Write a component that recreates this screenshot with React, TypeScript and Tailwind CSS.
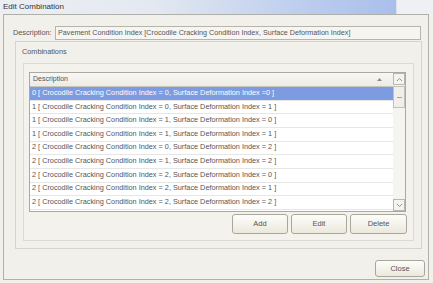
const rows = [
  "0 [ Crocodile Cracking Condition Index = 0, Surface Deformation Index =0 ]",
  "1 [ Crocodile Cracking Condition Index = 0, Surface Deformation Index = 1 ]",
  "1 [ Crocodile Cracking Condition Index = 1, Surface Deformation Index = 0 ]",
  "1 [ Crocodile Cracking Condition Index = 1, Surface Deformation Index = 1 ]",
  "2 [ Crocodile Cracking Condition Index = 0, Surface Deformation Index = 2 ]",
  "2 [ Crocodile Cracking Condition Index = 1, Surface Deformation Index = 2 ]",
  "2 [ Crocodile Cracking Condition Index = 2, Surface Deformation Index = 0 ]",
  "2 [ Crocodile Cracking Condition Index = 2, Surface Deformation Index = 1 ]",
  "2 [ Crocodile Cracking Condition Index = 2, Surface Deformation Index = 2 ]",
];

function Button({ label, className }: { label: string; className: string }) {
  return (
    <button
      className={`flex items-center justify-center rounded-[3px] border border-[#aaa79a] bg-[linear-gradient(to_bottom,#fdfdfb,#ebe8dc)] text-[7.5px] text-[#555] ${className}`}
    >
      {label}
    </button>
  );
}

function ScrollBtn({ up }: { up: boolean }) {
  return (
    <div className="flex h-[12px] w-[12px] items-center justify-center border border-[#b9b8b0] bg-[#f4f3ef]">
      <svg width="7" height="5" viewBox="0 0 7 5">
        <path
          d={up ? "M1 4 L3.5 1.5 L6 4" : "M1 1 L3.5 3.5 L6 1"}
          fill="none"
          stroke="#8a8a88"
          strokeWidth="0.9"
        />
      </svg>
    </div>
  );
}

export default function App() {
  return (
    <div className="flex h-[283px] w-[433px] flex-col bg-[#f1f0eb] font-['Liberation_Sans',Arial,sans-serif] text-[#555]">
      {/* title bar */}
      <div className="flex h-[14px] items-center bg-[linear-gradient(to_right,#eceef2_0%,#e4e9f1_35%,#bccdee_70%,#a9bfea_91.5%,#eef0f3_91.6%)] pl-[3px] text-[8px] text-[#333]">
        Edit Combination
      </div>

      <div className="flex flex-1 pb-[3px] pl-[3px] pr-[4px]">
        <div className="flex flex-1 flex-col border border-[#b0b0ab] bg-[#f1f0eb]">
          {/* description */}
          <div className="mt-[11px] flex items-center pl-[9px] pr-[7px]">
            <span className="w-[42px] text-[7.3px]">Description:</span>
            <div className="flex h-[14px] flex-1 items-center border border-[#b7b5aa] bg-[#f6f5f1] pl-[2px] text-[7.2px]">
              Pavement Condition Index [Crocodile Cracking Condition Index, Surface Deformation Index]
            </div>
          </div>

          {/* group */}
          <div className="ml-[11px] mr-[6px] mt-[1px] flex h-[208px] flex-col border border-[#d7d5cb] bg-[#f1f0ea]">
            <div className="flex h-[21px] items-center pl-[6px] text-[7.3px]">Combinations</div>
            <div className="mx-[7px] flex h-[178px] flex-col border border-[#dcdad1] bg-[#f3f2ed]">
              {/* grid */}
              <div className="ml-[5px] mr-[7px] mt-[8px] flex h-[140px] border border-[#a9a8a2] bg-white">
                <div className="flex flex-1 flex-col">
                  <div className="flex h-[14px] items-center justify-between border-b border-[#c9c7bd] bg-[linear-gradient(to_bottom,#f8f7f3,#ecebe5)] pl-[3px] pr-[11px] text-[7px]">
                    <span>Description</span>
                    <svg width="5" height="3" viewBox="0 0 5 3">
                      <path d="M0 3 L2.5 0 L5 3 Z" fill="#8c8c8c" />
                    </svg>
                  </div>
                  {rows.map((r, i) => (
                    <div
                      key={i}
                      className={`flex h-[13.67px] items-center border-b border-[#e6e6e6] pl-[2px] text-[7.3px] ${
                        i === 0 ? "bg-[#7c9be0] text-white" : "text-[#555]"
                      }`}
                    >
                      {r}
                    </div>
                  ))}
                </div>
                <div className="flex w-[12px] flex-col justify-between bg-[#f5f4f0]">
                  <div className="flex flex-col">
                    <ScrollBtn up />
                    <div className="mt-[1px] flex h-[22px] items-center justify-center border border-[#c3c1b8] bg-[#f1efe9]">
                      <div className="h-[1px] w-[5px] bg-[#a5a39c]" />
                    </div>
                  </div>
                  <ScrollBtn up={false} />
                </div>
              </div>
              <div className="mr-[6px] mt-[2px] flex justify-end gap-[3px]">
                <Button label="Add" className="h-[20px] w-[56px]" />
                <Button label="Edit" className="h-[20px] w-[56px]" />
                <Button label="Delete" className="h-[20px] w-[57px]" />
              </div>
            </div>
          </div>

          <div className="mt-auto mb-[2px] flex justify-end pr-[3px]">
            <Button label="Close" className="h-[17px] w-[50px]" />
          </div>
        </div>
      </div>
    </div>
  );
}
